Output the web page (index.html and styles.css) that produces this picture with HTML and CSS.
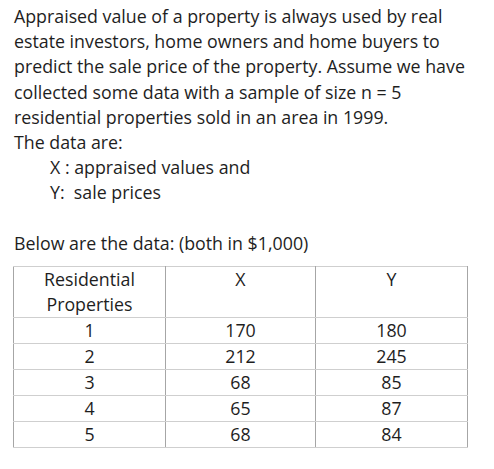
FILE: index.html
```html
<!DOCTYPE html>
<html>
<head>
<meta charset="utf-8">
<link rel="stylesheet" href="styles.css">
</head>
<body>
<div class="page">
  <p class="para">Appraised value of a property is always used by real<br>estate investors, home owners and home buyers to<br>predict the sale price of the property. Assume we have<br>collected some data with a sample of size n = 5<br>residential properties sold in an area in 1999.<br>The data are:</p>
  <p class="indent">X : appraised values and<br>Y:&nbsp; sale prices</p>
  <p class="para gap">Below are the data: (both in $1,000)</p>
  <table class="data">
    <tr class="head"><td>Residential<br>Properties</td><td>X</td><td>Y</td></tr>
    <tr><td>1</td><td>170</td><td>180</td></tr>
    <tr><td>2</td><td>212</td><td>245</td></tr>
    <tr><td>3</td><td>68</td><td>85</td></tr>
    <tr><td>4</td><td>65</td><td>87</td></tr>
    <tr><td>5</td><td>68</td><td>84</td></tr>
  </table>
</div>
</body>
</html>
```
FILE: styles.css
```css
html, body { margin: 0; padding: 0; background: #fff; }
.page {
  padding: 4px 0 0 14px;
  font-family: "Open Sans", "Lato", sans-serif;
  font-size: 17.8px;
  line-height: 25.2px;
  color: #1e1e1e;
}
.para, .indent { margin: 0; }
.indent { padding-left: 36px; }
.gap { margin-top: 25.2px; }
.data {
  margin: 10px 0 0 -1px;
  border-collapse: collapse;
}
.data td {
  border-top: 1px solid #cfcfcf;
  border-bottom: 1px solid #cfcfcf;
  border-left: 1px solid #a6a6a6;
  border-right: 1px solid #a6a6a6;
  text-align: center;
  vertical-align: middle;
  padding: 0;
  height: 24.7px;
  line-height: 25px;
}
.data td:nth-child(1) { width: 151px; }
.data td:nth-child(2) { width: 149px; }
.data td:nth-child(3) { width: 151px; }
.data tr.head td { height: 50px; vertical-align: top; }
```
